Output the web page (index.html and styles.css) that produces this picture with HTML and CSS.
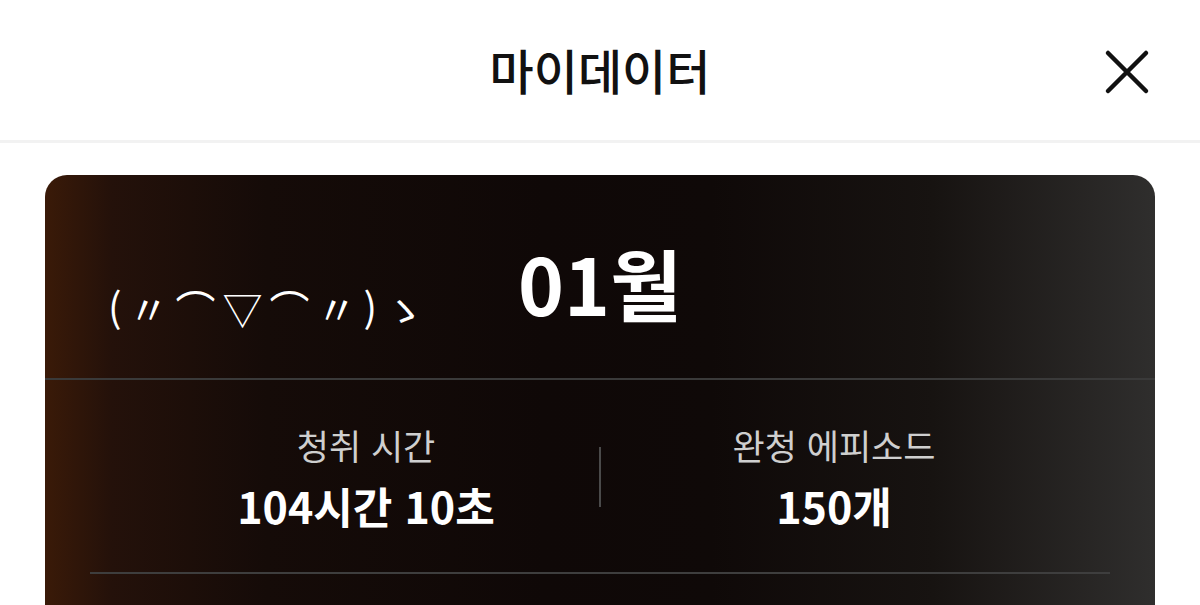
FILE: index.html
```html
<!DOCTYPE html>
<html lang="ko">
<head>
<meta charset="utf-8">
<title>마이데이터</title>
<link rel="stylesheet" href="styles.css">
</head>
<body>
<header class="topbar">
  <h1 class="title">마이데이터</h1>
  <button class="close" aria-label="닫기">
    <svg width="46" height="46" viewBox="0 0 46 46"><path d="M4 4 L42 42 M42 4 L4 42" stroke="#111" stroke-width="4.5" stroke-linecap="round" fill="none"/></svg>
  </button>
</header>
<main class="content">
  <section class="card">
    <div class="card-head">
      <div class="kaomoji">(〃⌒▽⌒〃)ゝ</div>
      <div class="month">01월</div>
      <div></div>
    </div>
    <div class="stats">
      <div class="stat">
        <div class="stat-label">청취 시간</div>
        <div class="stat-value">104시간 10초</div>
      </div>
      <div class="vdivider"></div>
      <div class="stat">
        <div class="stat-label">완청 에피소드</div>
        <div class="stat-value">150개</div>
      </div>
    </div>
    <div class="hline"></div>
    <div class="card-rest"></div>
  </section>
</main>
</body>
</html>
```
FILE: styles.css
```css
html, body {
  margin: 0;
  padding: 0;
  background: #ffffff;
  overflow: hidden;
  height: 605px;
  font-family: "Noto Sans CJK KR", "Noto Sans", sans-serif;
}
.topbar {
  height: 140px;
  border-bottom: 3px solid #f2f2f2;
  display: flex;
  align-items: center;
  justify-content: center;
  position: relative;
}
.title {
  margin: 0;
  font-size: 48px;
  font-weight: 500;
  color: #111;
  line-height: 1;
  padding-bottom: 2px;
}
.close {
  position: absolute;
  right: 50px;
  top: 49px;
  background: none;
  border: 0;
  padding: 0;
  width: 46px;
  height: 46px;
  display: block;
}
.close svg { display: block; }
.content {
  padding: 32px 45px 0;
}
.card {
  border-radius: 22px;
  height: 600px;
  background: linear-gradient(90deg, #3a1a08 0%, #24110a 6%, #150b08 20%, #0f0807 45%, #0f0908 60%, #171311 80%, #2f2e2d 100%);
  color: #fff;
}
.card-head {
  height: 203px;
  display: grid;
  grid-template-columns: 1fr auto 1fr;
  align-items: center;
  box-sizing: border-box;
  padding-top: 10px;
}
.kaomoji {
  font-size: 40px;
  line-height: 40px;
  letter-spacing: 7px;
  align-self: end;
  padding: 0 0 50px 63px;
  white-space: nowrap;
  color: #fff;
}
.month {
  font-size: 78px;
  font-weight: 700;
  line-height: 1;
}
.stats {
  border-top: 2px solid #3a3a3a;
  display: flex;
  justify-content: center;
  align-items: center;
  padding: 45px 0 43px;
}
.stat {
  width: 466px;
  text-align: center;
}
.stat-label {
  font-size: 35px;
  line-height: 40px;
  color: #cfcfcf;
  font-weight: 400;
}
.stat-value {
  margin-top: 16px;
  font-size: 43px;
  line-height: 48px;
  font-weight: 600;
  color: #fff;
}
.vdivider {
  width: 2px;
  height: 60px;
  background: #4a4a4a;
}
.hline {
  margin: 0 45px;
  height: 2px;
  background: #3e3e3e;
}
```
